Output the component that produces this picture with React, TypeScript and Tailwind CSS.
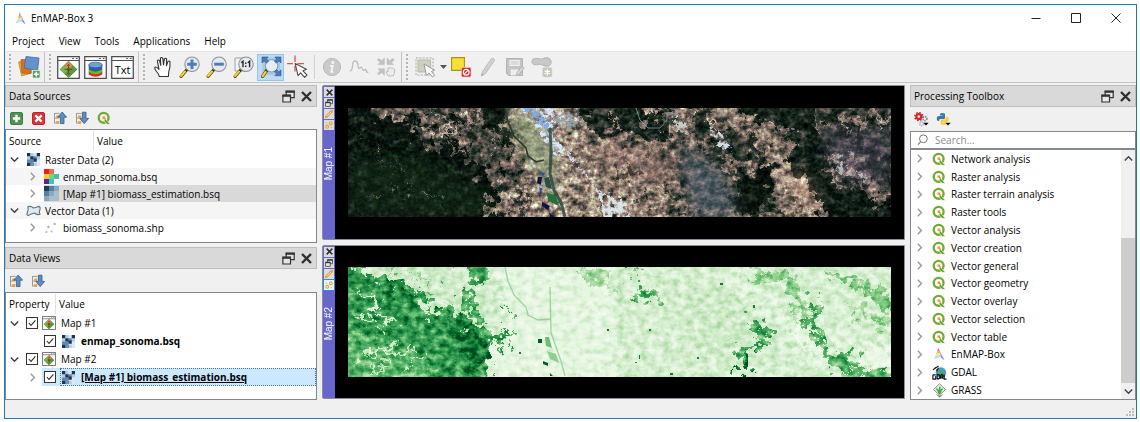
import React, { useState } from "react";

type Kids = { children?: React.ReactNode };

/* ---------- small drawings ---------- */

function Svg({ size = "size-4", box = "0 0 16 16", children }: Kids & { size?: string; box?: string }) {
  return (
    <svg viewBox={box} className={`${size} shrink-0`} fill="none" aria-hidden="true">
      {children}
    </svg>
  );
}

function PrismIcon({ size = "size-4" }: { size?: string }) {
  return (
    <Svg size={size}>
      <path d="M7 .6 L8.4 4.4 L5.8 5 Z" fill="#ee6d62" />
      <path d="M5.8 5 L8.4 4.4 L9.3 7 L4.8 7.6 Z" fill="#f8b25c" />
      <path d="M4.8 7.6 L9.3 7 L9.9 9 L3.8 10 Z" fill="#f3e98a" />
      <path d="M3.8 10 L9.9 9 L10.3 10.6 L2.8 12.2 Z" fill="#b4e6c0" />
      <path d="M2.8 12.2 L10.3 10.6 L10.4 11.4 L1.8 14 Z" fill="#b5dcf5" />
      <path d="M7 .6 L14.4 15.4 L10.2 10.8 Z" fill="#b3a4e4" />
      <path d="M10.2 9.6 L14.4 15.4 L10.6 12 Z" fill="#6c5cb8" />
    </Svg>
  );
}

function QIcon({ size = "size-4" }: { size?: string }) {
  return (
    <Svg size={size}>
      <circle cx="7.6" cy="7.8" r="5.6" stroke="#71aa35" strokeWidth="2.7" />
      <path d="M9.2 9 L15.4 15.2 H11.6 L8 11.4 Z" fill="#649e30" stroke="#fff" strokeWidth=".6" />
      <path d="M6.2 6.4 h3.4 l-.8 1 1.6 1.6 -1.2 1.2 -1.6 -1.5 -1 .9 Z" fill="#f28a2c" />
    </Svg>
  );
}

function GdalIcon() {
  return (
    <Svg size="size-[15px]">
      <circle cx="9.5" cy="8" r="5.6" fill="#3fa3c9" />
      <path d="M7 4 q3 0 3 3 l3 1 q1 3 -2 4 l-3 -3 z" fill="#5aa453" />
      <path d="M1 5 L7 1 M3 2.5 l3 2.5 M5 7 l2 -4" stroke="#222" strokeWidth="1.3" />
      <path d="M4 10.5h-3 M1 10 v5 h3 v-2.5 h-1 M5.5 10 v5 M5.5 10 q3 0 3 2.5 t-3 2.5 M9.5 15 v-4 l1 -1 1 1 v4 M9.5 13 h2 M13 10 v5 h2.4" stroke="#111" strokeWidth="1.2" />
    </Svg>
  );
}

function GrassIcon() {
  return (
    <Svg size="size-[15px]">
      <path d="M8 .8 L14.4 7 L8 12.8 L1.6 7 Z" fill="#eef2ee" stroke="#7d877d" />
      <path d="M3.4 11.4 L8 15.4 L12.6 11.4 L8 13.6 Z" fill="#777" />
      <path d="M8 12 Q7.6 8 4.6 6 M8 12 Q8 7 8.4 4 M8 12 Q8.6 8 11.4 6" stroke="#37ad3c" strokeWidth="1.7" />
    </Svg>
  );
}

function RasterIcon() {
  return (
    <Svg size="size-[13px]" box="0 0 12 12">
      <path d="M0 0h12v12H0z" fill="#dbe8f5" />
      <path d="M3 0h3v3H3zM9 3h3v3H9zM0 3h3v3H0zM6 9h3v3H6z" fill="#b4cde6" />
      <path d="M0 6h3v3H0zM6 3h3v3H6zM3 6h3v3H3z" fill="#5f87b5" />
      <path d="M0 0h3v3H0zM9 0h3v3H9zM3 3h3v3H3zM6 5h3v3H6zM0 9h3v3H0zM3 9h3v3H3z" fill="#1e3350" />
      <path d="M3 9h3v3H3z" fill="#6f93bd" />
    </Svg>
  );
}

function ColourGridIcon() {
  return (
    <Svg size="size-[15px]" box="0 0 15 15">
      <path d="M0 0h5v5H0z" fill="#ec1c24" />
      <path d="M5 0h5v5H5z" fill="#f26a4a" />
      <path d="M0 5h5v5H0z" fill="#f5c92d" />
      <path d="M5 5h5v5H5z" fill="#7ed07a" />
      <path d="M10 5h5v5h-5z" fill="#4bc0a4" />
      <path d="M0 10h5v5H0z" fill="#6a1d8c" />
      <path d="M5 10h5v5H5z" fill="#35c4c8" />
    </Svg>
  );
}

function BlueGridIcon() {
  return (
    <Svg size="size-[15px]" box="0 0 15 15">
      <path d="M0 0h15v15H0z" fill="#a9bfd0" />
      <path d="M0 0h5v5H0z" fill="#1c3f5e" />
      <path d="M5 0h5v5H5zM0 5h5v5H0z" fill="#58809f" />
      <path d="M10 0h5v5h-5zM5 5h5v5H5zM0 10h5v5H0z" fill="#8aa9c0" />
    </Svg>
  );
}

function PolygonIcon() {
  return (
    <Svg size="w-[15px] h-3" box="0 0 15 12">
      <path d="M2 1.6 Q5 .8 7.4 3 Q10 2.4 12.4 1.4 Q14.6 1.4 14 4.4 Q12.6 6.6 14 9.2 Q11 10.4 8.4 8 Q5.4 9 2 10.4 Q.4 10.2 1.2 7.8 Q2.6 4.8 2 1.6 Z" fill="#dfe9f2" stroke="#5c7186" strokeWidth="1.1" />
    </Svg>
  );
}

function PointsIcon() {
  return (
    <Svg size="w-[15px] h-3" box="0 0 15 12">
      <g fill="#b4b4b4">
        <circle cx="4.4" cy="5" r="1.2" />
        <circle cx="10.6" cy="2" r="1.2" />
        <circle cx="2.4" cy="10" r="1.1" />
        <circle cx="7.6" cy="9.6" r="1" />
      </g>
    </Svg>
  );
}

function MapWindow({ size = "size-[23px]" }: { size?: string }) {
  return (
    <Svg size={size} box="0 0 22 22">
      <path d="M.7 .7h20.6v20.6H.7z" fill="#fff" stroke="#4c4c4c" strokeWidth="1.2" />
      <path d="M1 4.3h20M14.5 2.4h1.6M18 2.4h1.6" stroke="#4c4c4c" />
      <path d="M11 5 L19 12.8 L11 20.6 L3 12.8 Z" fill="#5a9e3a" stroke="#355f2b" strokeWidth=".6" />
      <path d="M11 5 L15 9 L11 12.8 L7 9 Z" fill="#d98a4e" />
      <path d="M7 9 L11 12.8 L7 16.7 L3 12.8 Z" fill="#79ba4d" />
      <path d="M11 9v7.6M7.2 12.8h7.6M9.9 9.4 11 8l1.1 1.4M9.9 16.2 11 17.6l1.1-1.4" stroke="#5a3a20" strokeWidth=".8" />
      <circle cx="11" cy="12.8" r="1.5" fill="#8a3f1c" />
    </Svg>
  );
}

function DbWindow() {
  return (
    <Svg size="size-[23px]" box="0 0 22 22">
      <path d="M.7 .7h20.6v20.6H.7z" fill="#fff" stroke="#4c4c4c" strokeWidth="1.2" />
      <path d="M1 4.3h20M14.5 2.4h1.6M18 2.4h1.6" stroke="#4c4c4c" />
      <path d="M4.5 15v2.6q6.5 4.4 13 0V15z" fill="#e02b20" />
      <path d="M4.5 12.4v3q6.5 4.2 13 0v-3z" fill="#58c322" />
      <path d="M4.5 8.6v4.4q6.5 4 13 0V8.6z" fill="#315f9b" />
      <ellipse cx="11" cy="8.6" rx="6.5" ry="2.7" fill="#6fa0d6" stroke="#315f9b" strokeWidth=".7" />
    </Svg>
  );
}

function TxtWindow() {
  return (
    <span className="relative grid size-[23px] place-items-end justify-center">
      <span className="absolute inset-0">
        <Svg size="size-[23px]" box="0 0 22 22">
          <path d="M.7 .7h20.6v20.6H.7z" fill="#fff" stroke="#4c4c4c" strokeWidth="1.2" />
          <path d="M1 4.3h20M14.5 2.4h1.6M18 2.4h1.6" stroke="#4c4c4c" />
        </Svg>
      </span>
      <span className="relative pb-px text-[11px] leading-4">Txt</span>
    </span>
  );
}

function LayersAddIcon() {
  return (
    <Svg size="size-6" box="0 0 24 24">
      <path d="M1.6 7 L12 4.6 L14.6 18 L4.6 21 Z" fill="#e6b32e" stroke="#b07a17" strokeWidth=".7" />
      <path d="M4 4.6 L15 4.6 L13.4 18.6 L5 18 Z" fill="#dc6f25" stroke="#a95a17" strokeWidth=".7" />
      <path d="M9 1.5 L22 3 L20.6 15.4 L7.2 13 Z" fill="#6393ca" stroke="#3d6ba4" strokeWidth=".8" />
      <path d="M15.5 15.4h7.6v7.6h-7.6z" fill="#5d9b62" stroke="#e9f3e9" strokeWidth=".8" />
      <path d="M19.3 16.8v4.8M16.9 19.2h4.8" stroke="#fff" strokeWidth="1.6" />
    </Svg>
  );
}

function HandIcon() {
  return (
    <Svg size="size-6" box="0 0 24 24">
      <path d="M8.4 21.5 Q7.5 18.5 4.8 15.5 Q3 12.6 4.3 12 Q5.8 11.6 8 14.4 L6.4 6.2 Q6.6 4.4 8.4 5.4 L9.8 10.4 L9.4 3.3 Q10.4 1.8 11.8 3.2 L12.5 10 L13.4 3.8 Q14.6 2.6 15.6 4 L15.4 10.8 L17 6.4 Q18.6 5.4 19 7 Q19.3 12 17.8 16.6 L17.4 21.5 Z" fill="#fff" stroke="#333" strokeWidth="1.1" strokeLinejoin="round" />
    </Svg>
  );
}

function Lens({ children }: Kids) {
  return (
    <>
      <path d="M9 14.6 L3 21.4" stroke="#3c300c" strokeWidth="3" strokeLinecap="round" />
      <path d="M7 16.6 L3.1 21" stroke="#f4d42c" strokeWidth="2.2" strokeLinecap="round" />
      <circle cx="14" cy="9.2" r="7.2" fill="#e6eaee" stroke="#8a9299" strokeWidth="1.1" />
      {children}
    </>
  );
}

function ZoomInIcon() {
  return (
    <Svg size="size-6" box="0 0 24 24">
      <Lens>
        <path d="M14 4.4v9.6M9.2 9.2h9.6" stroke="#4a7db8" strokeWidth="3" />
      </Lens>
    </Svg>
  );
}

function ZoomOutIcon() {
  return (
    <Svg size="size-6" box="0 0 24 24">
      <Lens>
        <path d="M9.2 9.2h9.6" stroke="#4a7db8" strokeWidth="3" />
      </Lens>
    </Svg>
  );
}

function ZoomNativeIcon() {
  return (
    <Svg size="size-6" box="0 0 24 24">
      <path d="M3 3h11v13H3z" fill="#f3f3f3" stroke="#999" strokeWidth=".9" />
      <Lens>
        <path d="M9.2 7.8 11 6.3v6M15.8 7.8l1.8-1.5v6" stroke="#222" strokeWidth="1.4" />
        <path d="M13.7 7.4v1.5M13.7 10.4v1.5" stroke="#222" strokeWidth="1.4" />
      </Lens>
    </Svg>
  );
}

function ZoomFullIcon() {
  return (
    <Svg size="size-6" box="0 0 24 24">
      <path d="M3.5 2.5h17.5v17.5H3.5z" fill="#8fb4dc" opacity=".5" />
      <path d="M8 15 L3.6 21.4" stroke="#3c300c" strokeWidth="3.2" strokeLinecap="round" />
      <path d="M6.6 17 L3.7 21.2" stroke="#f4d42c" strokeWidth="2.2" strokeLinecap="round" />
      <circle cx="12.6" cy="10.8" r="6.2" fill="#e4ecf4" stroke="#8797a8" />
      <g fill="#4a7db8" stroke="#2c5588" strokeWidth=".6">
        <path d="M3 2h6.2L7.5 3.9l2.2 2.2-2.2 2.2-2.4-2.4L3 8z" />
        <path d="M22 2h-6.2l1.9 1.9-2.4 2.2 2.2 2.2 2.4-2.4L22 8z" />
        <path d="M22 20.8h-6.2l1.9-1.9-2.4-2.2 2.2-2.2 2.4 2.4 2.1-2.1z" />
      </g>
    </Svg>
  );
}

function IdentifyCursorIcon() {
  return (
    <Svg size="size-6" box="0 0 24 24">
      <path d="M9 .5v6.5M9 11v5.5M1 8.7h6M11.5 8.7H18" stroke="#e0544e" strokeWidth="1.3" />
      <path d="M9.2 8.6 L12 20.6 L14.6 17.8 L18.6 22.4 L21 20.2 L17 15.8 L20.4 14.2 Z" fill="#fff" stroke="#4a4a4a" strokeWidth="1.1" strokeLinejoin="round" />
    </Svg>
  );
}

function InfoIcon() {
  return (
    <Svg size="size-5" box="0 0 20 20">
      <circle cx="10" cy="10" r="8.6" fill="#cacaca" stroke="#bababa" />
      <circle cx="10.8" cy="5.4" r="1.5" fill="#f5f5f5" />
      <path d="M8 8.8h2.8L9.2 14.8h2.2" stroke="#f5f5f5" strokeWidth="1.8" />
    </Svg>
  );
}

function ProfileIcon() {
  return (
    <Svg size="size-5" box="0 0 20 20">
      <path d="M.8 14 Q3.4 13.6 3.6 8 Q4 3.6 6 4 Q8.6 4 9 8.4 Q9.2 12.6 11 11 Q12.6 9 13.6 12 Q14.6 14.6 16 12.6 Q17.4 11.8 17.6 15 L19.4 15.4" stroke="#bcbcbc" strokeWidth="1.3" />
    </Svg>
  );
}

function GridHandIcon() {
  return (
    <Svg size="size-5" box="0 0 20 20">
      <g fill="#c2c2c2" stroke="#b4b4b4" strokeWidth=".4">
        <path d="M8.4 1v6.6H1.8l2.2-2.2L1.4 3l1.4-1.6L5.8 3.6z" />
        <path d="M11 1v6.6h6.6l-2.2-2.2L18.4 3 17 1.4l-3.4 2.2z" />
        <path d="M8.4 18.4v-6.6H1.8L4 14l-2.6 2.6 1.4 1.4 3-2.6z" />
      </g>
      <path d="M12 18.8l-2-4q.6-1.6 2 0v-3.6q1-1 1.8 0 1-1 1.8.2 1-.7 1.7.4 1-.2 1.4.8l-.4 3.8-1 2.4z" fill="#ececec" stroke="#bcbcbc" />
    </Svg>
  );
}

function SelectIcon() {
  return (
    <Svg size="size-[22px]" box="0 0 22 22">
      <path d="M1 2h17v17H1z" stroke="#aaa" strokeDasharray="2 1.4" />
      <path d="M3 4h12.6v12H3z" fill="#cfcfbf" stroke="#b7b7a8" />
      <path d="M9 8 L11.4 19.5 L14 17 L17.4 21 L19.6 19.4 L16.4 15.4 L19.6 14 Z" fill="#f7f7f7" stroke="#999" strokeLinejoin="round" />
    </Svg>
  );
}

function DeselectIcon() {
  return (
    <Svg size="size-[22px]" box="0 0 22 22">
      <path d="M1.6 1.6h12.8v12.8H1.6z" fill="#f8e037" stroke="#ab9115" strokeWidth="1.1" />
      <rect x="11.4" y="11.4" width="9.6" height="9.6" rx="1.4" fill="#d8282e" stroke="#f2c9ca" strokeWidth=".7" />
      <circle cx="16.2" cy="16.2" r="2.9" stroke="#fff" strokeWidth="1.2" />
      <path d="M14.2 18.2l4-4" stroke="#fff" strokeWidth="1.2" />
    </Svg>
  );
}

function PencilIcon() {
  return (
    <Svg size="size-5" box="0 0 20 20">
      <path d="M3.4 19 L4.6 14.4 L13.6 1.4 Q15.6 .6 16.6 3.2 L7.6 16.4 Z" fill="#d2d2cc" stroke="#bdbdb8" />
      <path d="M3.4 19 L4 16.6 L5.4 17.6 Z" fill="#999" />
    </Svg>
  );
}

function SaveIcon() {
  return (
    <Svg size="size-5" box="0 0 20 20">
      <path d="M1.5 1.5h16v17h-14l-2-2z" fill="#c4c4c4" stroke="#b2b2b2" />
      <path d="M4.4 3h10.4v6H4.4z" fill="#efefef" />
      <path d="M5.6 5h8M5.6 7h8" stroke="#c6c6c6" />
      <path d="M5.6 12.4h7.6v6H5.6z" fill="#ededed" />
      <path d="M11 18.6 L12 15.6 L17 9.4 L19.2 11 L14 17.4 Z" fill="#dcd7d2" stroke="#b3aca6" strokeWidth=".8" />
    </Svg>
  );
}

function PolygonAddIcon() {
  return (
    <Svg size="size-[22px]" box="0 0 22 22">
      <path d="M1.6 3.4 Q4 1.8 7.4 2.6 Q11 4 14 1.8 Q18.6 1 20 4.6 Q20.8 9 17.4 10.2 Q13.6 10.6 11.6 9 Q8.4 7.4 5.6 8.8 Q1.6 9.4 1 6.8 Q.8 4.6 1.6 3.4 Z" fill="#c8c8c8" stroke="#b6b6b6" />
      <rect x="11.6" y="11.6" width="9.4" height="9.4" rx="1.4" fill="#c2c2b8" stroke="#dededc" strokeWidth=".7" />
      <path d="M16.3 13v6.6M13.5 14.7l5.6 3.2M19.1 14.7l-5.6 3.2" stroke="#fff" strokeWidth="1.3" />
    </Svg>
  );
}

function AddIcon() {
  return (
    <Svg size="size-[13px]" box="0 0 13 13">
      <rect x=".5" y=".5" width="12" height="12" rx="1.5" fill="#4f9156" stroke="#3d7d45" />
      <path d="M6.5 2.8v7.4M2.8 6.5h7.4" stroke="#fff" strokeWidth="2.4" />
    </Svg>
  );
}

function RemoveIcon() {
  return (
    <Svg size="size-[13px]" box="0 0 13 13">
      <rect x=".5" y=".5" width="12" height="12" rx="1.5" fill="#dc3339" stroke="#c2242a" />
      <path d="M3.4 3.4l6.2 6.2M9.6 3.4L3.4 9.6" stroke="#fff" strokeWidth="2.2" />
    </Svg>
  );
}

function TreeArrowIcon({ down = false }: { down?: boolean }) {
  return (
    <Svg size="size-[14px]" box="0 0 14 14">
      <path d="M1.5 2v10.4M1.5 2.4h5M1.5 7h3M1.5 12h3" stroke="#9b9b9b" />
      <path d="M3.2 4.6h3v3h-3zM3.2 10h3v3h-3z" fill="#f0a03c" />
      {down ? (
        <path d="M7.4 1.2h3.6v6.2h2.6L9.2 12.6 4.8 7.4h2.6z" fill="#5d8dc4" stroke="#2f5a8b" strokeWidth=".8" />
      ) : (
        <path d="M7.4 12.6h3.6V6.2h2.6L9.2 1 4.8 6.2h2.6z" fill="#5d8dc4" stroke="#2f5a8b" strokeWidth=".8" />
      )}
    </Svg>
  );
}

function GearsIcon() {
  return (
    <Svg size="size-[15px]" box="0 0 15 15">
      <circle cx="4.8" cy="4.6" r="2.5" stroke="#d3242b" strokeWidth="2.2" />
      <circle cx="4.8" cy="4.6" r="4" stroke="#d3242b" strokeWidth="1.4" strokeDasharray="1.57 1.57" />
      <circle cx="11" cy="6.6" r="2" stroke="#8a8a8a" strokeWidth="1.6" strokeDasharray="1.4 .7" />
      <circle cx="7.6" cy="11.8" r="1.9" stroke="#9dbbe4" strokeWidth="1.6" strokeDasharray="1.4 .6" />
      <path d="M9.4 10.8h5.2L12 13.6z" fill="#000" />
    </Svg>
  );
}

function PythonIcon() {
  return (
    <Svg size="size-[15px]" box="0 0 15 15">
      <path d="M4 1.8Q6.4.4 9 1.8V6Q9 7 8 7H4.4Q3 7 3 9H2Q.4 8.4.8 5.6 1 4 3 4h3.4V3.4H4z" fill="#3b75ab" />
      <path d="M10 4.4h1.4Q13 5 12.8 8q-.2 2-2 2H7v.6h3v1.6q-2.6 1.4-5.4 0V8.6Q4.6 7.6 6 7.6h3Q10 7.4 10 6z" fill="#f6cf43" />
      <path d="M9.4 10.8h5.2L12 13.6z" fill="#000" />
    </Svg>
  );
}

function FloatIcon({ size = "size-[13px]" }: { size?: string }) {
  return (
    <Svg size={size} box="0 0 13 13">
      <path d="M4.2 1h8v6.6h-8z" fill="#e6e6e6" stroke="#333" strokeWidth="1.2" />
      <path d="M3.6 1.8h9.2" stroke="#333" strokeWidth="2" />
      <path d="M.9 5.2h7.6V12H.9z" fill="#e6e6e6" stroke="#333" strokeWidth="1.2" />
      <path d="M.4 5.8h8.6" stroke="#333" strokeWidth="2" />
    </Svg>
  );
}

function CrossIcon({ size = "size-[11px]" }: { size?: string }) {
  return (
    <Svg size={size} box="0 0 11 11">
      <path d="M1 1l9 9M10 1L1 10" stroke="#303030" strokeWidth="2.4" />
    </Svg>
  );
}

function LinkIcon() {
  return (
    <Svg size="size-2" box="0 0 8 8">
      <path d="M1 7 L7 1" stroke="#e8a23c" strokeWidth="2.6" strokeLinecap="round" />
      <path d="M2 6 L6 2" stroke="#fbe6c0" strokeWidth=".8" />
    </Svg>
  );
}

function UnlinkIcon() {
  return (
    <Svg size="size-2" box="0 0 8 8">
      <g stroke="#e8a23c" strokeWidth="1.1">
        <circle cx="5.8" cy="2.2" r="1.4" />
        <circle cx="2.2" cy="5.8" r="1.4" />
        <path d="M1 2l1 .4M6 6.8l.6-.8" />
      </g>
    </Svg>
  );
}

function Chevron({ open }: { open: boolean }) {
  return (
    <Svg size="size-[9px]" box="0 0 9 9">
      {open ? (
        <path d="M.8 2.6 L4.5 6.2 L8.2 2.6" stroke="#404040" strokeWidth="1.4" />
      ) : (
        <path d="M2.8 .8 L6.4 4.5 L2.8 8.2" stroke="#9a9a9a" strokeWidth="1.4" />
      )}
    </Svg>
  );
}

/* ---------- map imagery ---------- */

function TrueColourScene() {
  return (
    <svg viewBox="0 0 543 109" className="block h-auto w-full" role="img" aria-label="enmap_sonoma.bsq">
      <defs>
        <filter id="tc" filterUnits="userSpaceOnUse" x="0" y="0" width="543" height="109" colorInterpolationFilters="sRGB">
          <feTurbulence type="fractalNoise" baseFrequency=".09" numOctaves="5" seed="5" />
          <feColorMatrix values="1 0 0 0 0 0 1 0 0 0 0 0 1 0 0 0 0 0 0 1" result="warp" />
          <feDisplacementMap in="SourceGraphic" in2="warp" scale="38" xChannelSelector="R" yChannelSelector="G" />
          <feGaussianBlur stdDeviation=".6" result="field" />
          <feTurbulence type="fractalNoise" baseFrequency=".1 .13" numOctaves="5" seed="11" />
          <feColorMatrix values="1 0 0 0 0 1 0 0 0 0 1 0 0 0 0 0 0 0 0 1" result="grey" />
          <feComposite in="field" in2="grey" operator="arithmetic" k1="1.1" k2=".45" k3=".45" k4="-.225" />
          <feColorMatrix values="1 0 0 0 0 1 0 0 0 0 1 0 0 0 0 0 0 0 0 1" />
          <feComponentTransfer result="ramp">
            <feFuncR type="table" tableValues=".02 .06 .2 .42 .6 .7 .8 .92" />
            <feFuncG type="table" tableValues=".05 .12 .24 .37 .51 .65 .78 .9" />
            <feFuncB type="table" tableValues=".04 .08 .21 .34 .46 .56 .7 .86" />
          </feComponentTransfer>
          <feTurbulence type="fractalNoise" baseFrequency=".3" numOctaves="4" seed="4" />
          <feColorMatrix values="1.2 .3 .1 0 -.3 .9 .6 .1 0 -.3 .9 .2 .5 0 -.3 0 0 0 0 1" result="chroma" />
          <feComposite in="ramp" in2="chroma" operator="arithmetic" k1=".9" k2=".55" k3=".12" k4="-.06" />
        </filter>
        <filter id="rough" filterUnits="userSpaceOnUse" x="0" y="0" width="543" height="109" colorInterpolationFilters="sRGB">
          <feTurbulence type="fractalNoise" baseFrequency=".2" numOctaves="4" seed="9" result="n" />
          <feColorMatrix values="1 0 0 0 0 0 1 0 0 0 0 0 1 0 0 0 0 0 0 1" result="w" />
          <feDisplacementMap in="SourceGraphic" in2="w" scale="14" xChannelSelector="R" yChannelSelector="G" result="d" />
          <feColorMatrix in="n" values="0 0 0 0 0 0 0 0 0 0 0 0 0 0 0 0 0 0 6 -2.4" result="m" />
          <feComposite in="d" in2="m" operator="in" />
        </filter>
        <filter id="soft" filterUnits="userSpaceOnUse" x="0" y="0" width="543" height="109">
          <feGaussianBlur stdDeviation="7" />
        </filter>
      </defs>
      <g filter="url(#tc)">
        <path d="M-20-20h583v149H-20z" fill="#747474" />
        <path d="M-20-20H148L152 12 168 48 177 85V129H-20z" fill="#5a5a5a" />
        <path d="M-20-20H12L32 12 60 15 73 29 84 46 98 33 114 48 128 58 140 70 146 96 138 129H-20z" fill="#181818" />
        <path d="M40 8L58 4 64 12 50 14zM70 12L84 20 86 34 78 26zM88 2L98 10 106 26 98 22zM118 4L130 12 124 22zM142 30L150 42 146 46z" fill="#a4a4a4" />
        <path d="M60 0L72 6 78 14 64 8zM96 22L110 30 122 44 112 42zM108 4L118 14 116 24 106 14z" fill="#1c1c1c" />
        <path d="M128-20H148L160 25 166 50 142 20z" fill="#222" />
        <path d="M150 54L162 62 160 70 146 66z" fill="#202020" />
        <path d="M14 92L30 84 50 84 64 80M16 20L26 40 44 60M40 70L60 60M80 84L100 96" stroke="#585858" strokeWidth="1.8" />
        <path d="M146 78L172 82V109H140z" fill="#8c8c8c" />
        <path d="M158-10H225L250 60 262 120H178L176 60z" fill="#a0a0a0" />
        <path d="M225 30L290 50 325 110H220z" fill="#8e8e8e" />
        <path d="M232-10H320L318 30 302 36 262 26 236 20z" fill="#303030" />
        <path d="M232 14L258 30 262 40 236 34zM264 4L274 20 270 24zM294-4L310 0 308 14 298 12z" fill="#8c8c8c" />
        <path d="M270 56L284 58 290 70 276 72zM300 44L312 50 308 56zM318 78L336 90 330 100zM292 84L300 90 296 100z" fill="#3c3c3c" />
        <path d="M322 36L352 42 376 60 388 109H345L330 70z" fill="#585858" />
        <path d="M342 6L364 10 388 42 374 44 350 26z" fill="#b0b0b0" />
        <path d="M345-10L368 20 410 34 420 60 428 109H386L372 60 345 20z" fill="#404040" />
        <path d="M372 52L400 44 408 58 384 68z" fill="#787878" />
        <path d="M390 78L422 54 424 84 410 106H386z" fill="#161616" />
        <path d="M388-10H470V20L480 60 484 96 462 90 440 60 446 20 404 12z" fill="#282828" />
        <path d="M470-10H560V80H490L474 40z" fill="#464646" />
        <path d="M480 12L500 16 530 44 516 40zM510 44L540 50 540 66 524 60z" fill="#222" />
        <path d="M498 4L510 4 506 24 496 20zM520 2L540 6V14L522 12z" fill="#888" />
        <path d="M408 14L436 20 442 40 430 52 416 34z" fill="#848484" />
        <path d="M374-6L396 18 420 40 440 62" stroke="#929292" strokeWidth="9" />
        <path d="M426 60L452 64 478 96 462 106 434 80z" fill="#a0a0a0" />
        <path d="M482 44L498 46 516 62 518 76 496 72z" fill="#868686" />
        <path d="M466 84L500 76 560 92V129H482z" fill="#242424" />
        <path d="M514 78H543V94H520z" fill="#6c6c6c" />
      </g>
      <g filter="url(#soft)">
        <path d="M160 0L190 12 206 44 210 95 190 66 166 30z" fill="#8ba37a" opacity=".6" />
        <path d="M330 36L372 60 392 109H345z" fill="#62788c" opacity=".45" />
        <path d="M470 20H543V76H494z" fill="#675b7c" opacity=".35" />
        <path d="M0 50L80 50 144 90 138 109H0z" fill="#123816" opacity=".35" />
        <path d="M250 34L300 40 330 60 300 80 256 60z" fill="#b3847a" opacity=".35" />
        <path d="M430 62L456 66 476 96 452 90z" fill="#d59f85" opacity=".4" />
      </g>
      <g filter="url(#rough)">
        <path d="M170 -4H200L216 12 206 26 220 48 206 44 190 22z" fill="#d6e6ff" />
        <path d="M172 -4H186L202 18 198 24z" fill="#7fabe6" />
        <path d="M204 10L224 6 238 12 222 20 206 18z" fill="#91a1ad" />
        <path d="M220 44L244 76 258 96" stroke="#d4dcea" strokeWidth="3" />
        <path d="M324 9L336 11 342 26 330 24z" fill="#c8ccc6" />
        <path d="M362 20L376 30 386 42 372 40z" fill="#d4d8e2" />
        <path d="M252 84L276 92 286 115H250z" fill="#dbe4e4" />
        <path d="M484 46L496 50 504 68 490 62zM506 60L522 70 518 76z" fill="#b5b9be" />
        <path d="M528 10L538 16 532 22z" fill="#c8c8b4" />
      </g>
      <path d="M157 0L160 14 166 28 178 40 180 48 188 54 196 52" stroke="#28382a" strokeWidth="1.6" fill="none" />
      <path d="M202 20L203 42 202 66 206 82 213 94 217 109" stroke="#2a4a3e" strokeWidth="3" fill="none" opacity=".85" />
      <path d="M196 70l5-1 3 12-6-2z" fill="#2d4d42" />
      <path d="M198 84l10 4 3 10-10-5z" fill="#23703d" />
      <path d="M190 69h4l-1 8-4-2zM194 94l8 4-2 4-6-4zM201 104l5 5h-4z" fill="#0d1244" />
      <path d="M191 79l4 2-3 3zM192 64l5 1-2 3z" fill="#204ca4" />
      <path d="M288 0L292 12 300 20 312 20 319 12V4L334 8" stroke="#7ca3a8" strokeWidth="1" fill="none" opacity=".8" />
    </svg>
  );
}

function BiomassScene() {
  return (
    <svg viewBox="0 0 543 110" className="block h-auto w-full" role="img" aria-label="biomass_estimation.bsq">
      <defs>
        <filter id="bio" filterUnits="userSpaceOnUse" x="0" y="0" width="543" height="110" colorInterpolationFilters="sRGB">
          <feTurbulence type="fractalNoise" baseFrequency=".1" numOctaves="5" seed="5" />
          <feColorMatrix values="1 0 0 0 0 0 1 0 0 0 0 0 1 0 0 0 0 0 0 1" result="warp" />
          <feDisplacementMap in="SourceGraphic" in2="warp" scale="36" xChannelSelector="R" yChannelSelector="G" />
          <feGaussianBlur stdDeviation=".6" result="field" />
          <feTurbulence type="fractalNoise" baseFrequency=".13 .16" numOctaves="5" seed="23" />
          <feColorMatrix values="1 0 0 0 0 1 0 0 0 0 1 0 0 0 0 0 0 0 0 1" result="grey" />
          <feComposite in="field" in2="grey" operator="arithmetic" k1=".7" k2=".65" k3=".36" k4="-.18" />
          <feColorMatrix values="1 0 0 0 0 1 0 0 0 0 1 0 0 0 0 0 0 0 0 1" />
          <feComponentTransfer>
            <feFuncR type="table" tableValues=".95 .89 .79 .65 .46 .26 .15 .02 0" />
            <feFuncG type="table" tableValues=".98 .96 .91 .85 .77 .66 .55 .44 .28" />
            <feFuncB type="table" tableValues=".93 .87 .76 .62 .47 .37 .28 .18 .12" />
          </feComponentTransfer>
        </filter>
      </defs>
      <g filter="url(#bio)">
        <path d="M-20-20h583v150H-20z" fill="#303030" />
        <path d="M150-20H260L270 130H140z" fill="#1c1c1c" />
        <path d="M12-10H140L160 50 145 70 80 40z" fill="#363636" />
        <path d="M-20-20H10L24 16 36 12 62 18 74 32 84 52 96 34 112 48 126 58 140 66 156 70 144 78 142 98 134 130H-20z" fill="#b0b0b0" />
        <path d="M-20 60L40 74 84 96 76 130H-20z" fill="#929292" />
        <path d="M14 92L30 84 50 84 64 80M16 20L26 40 44 60M60 100L78 92M8 46L30 60M24 104L40 98" stroke="#3c3c3c" strokeWidth="3" />
        <path d="M30 12L60 18 70 34 50 36z" fill="#cacaca" />
        <path d="M100 50L120 54 142 80 142 98 128 104 110 80z" fill="#d6d6d6" />
        <path d="M102-8L130-6 142 12 132 16z" fill="#a0a0a0" />
        <path d="M112 20L124 30 136 56 128 54 116 40z" fill="#a4a4a4" />
        <path d="M142 66L158 66 156 72 142 74zM158 38L168 44 166 50zM150 80L160 76 158 82z" fill="#a4a4a4" />
        <path d="M40 2L50 4 48 10zM60 4L76 14 70 16zM80 14L88 26 82 24z" fill="#707070" />
        <path d="M230 0L262 6 262 24 240 16z" fill="#606060" />
        <path d="M270-6H286L290 8zM284 24L304 22 312 30 294 36z" fill="#909090" />
        <path d="M325 20L400 30 408 80 350 90z" fill="#393939" />
        <path d="M400 54L418 56 422 74 404 84 398 102 386 96 388 86 412 74z" fill="#a4a4a4" />
        <path d="M390 94L402 86 400 104 388 104z" fill="#e8e8e8" />
        <path d="M400 4L448 4 460 54 450 50 438 14 404 12z" fill="#6c6c6c" />
        <path d="M462 30L474 32 468 60 482 86 510 92 514 102 490 102 466 84 460 60z" fill="#989898" />
        <path d="M476 4L496 6 543 26V46L500 16z" fill="#767676" />
        <path d="M500 36L543 54V66L510 46z" fill="#666" />
        <path d="M476 30L500 60 510 80 490 76z" fill="#262626" />
        <path d="M492 104H543V125H500z" fill="#8c8c8c" />
        <path d="M512 78H543V100H514z" fill="#121212" />
        <path d="M380 0L420 40 460 70 480 105" stroke="#1c1c1c" strokeWidth="8" />
      </g>
      <path d="M157 0L160 14 166 28 178 40 180 48 190 53 202 52 M202 20L203 66 213 94 217 109" stroke="#8dce93" strokeWidth="1.3" fill="none" opacity=".85" />
      <path d="M197 70l4 0 3 11-6-2z" fill="#6cbd75" />
      <path d="M199 84l9 3 3 9-9-4z" fill="#8fcf91" />
      <path d="M190 72h4v4h-4zM195 94l5 2 0 3-5-2zM202 106l3 3h-3z" fill="#07582b" />
      <g fill="#1b7a3b">
        <path d="M259 62h2v2h-2zM291 88h1v4h-1zM322 106h3v2h-3zM349 90h2v2h-2zM372 16h3v2h-3zM405 38h2v3h-2zM301 62h2v2h-2zM171 85h2v2h-2zM287 95h2v1h-2z" />
      </g>
    </svg>
  );
}

/* ---------- window parts ---------- */

function IconButton({ label, children }: Kids & { label: string }) {
  return (
    <button type="button" aria-label={label} title={label} className="grid h-5 w-[22px] place-items-center hover:bg-[#d8e6f2]">
      {children}
    </button>
  );
}

function Tool({ label, active, disabled, children }: Kids & { label: string; active?: boolean; disabled?: boolean }) {
  return (
    <button
      type="button"
      aria-label={label}
      title={label}
      disabled={disabled}
      className={
        active
          ? "grid h-[27px] w-[27px] place-items-center border border-[#92c5ef] bg-[#bcdcf4]"
          : "grid h-[27px] w-[27px] place-items-center enabled:hover:bg-[#d8e6f2]"
      }
    >
      {children}
    </button>
  );
}

function Handle() {
  return <span className="mx-1 h-[26px] w-0 border-l-2 border-dotted border-[#b4b4b4]" />;
}

function Divider() {
  return <span className="ml-0.5 h-[31px] w-px bg-[#c4c4c4]" />;
}

function DockTitle({ children }: Kids) {
  return (
    <div className="flex h-[22px] items-center border border-[#bdbdbd] bg-[#d9d9d9] pr-1 pl-[3px]">
      <h2 className="flex-1">{children}</h2>
      <button type="button" aria-label="Float panel" className="mr-1.5">
        <FloatIcon />
      </button>
      <button type="button" aria-label="Close panel">
        <CrossIcon />
      </button>
    </div>
  );
}

function ColumnHeads({ first, second }: { first: string; second: string }) {
  return (
    <div className="flex h-[21px] items-center">
      <span
        className={
          first === "Source"
            ? "w-[88px] border-r border-[#e0e0e0] pl-[3px] leading-5"
            : "w-[50px] border-r border-[#e0e0e0] pl-[3px] leading-5"
        }
      >
        {first}
      </span>
      <span className="pl-[3px]">{second}</span>
    </div>
  );
}

function Check({ label }: { label: string }) {
  const [on, setOn] = useState(true);
  return (
    <span className="grid size-3 shrink-0 place-items-center">
      <input
        type="checkbox"
        aria-label={label}
        checked={on}
        onChange={() => setOn(!on)}
        className="peer col-start-1 row-start-1 size-3 appearance-none border border-[#333] bg-white"
      />
      <svg viewBox="0 0 10 10" className="pointer-events-none invisible col-start-1 row-start-1 size-[10px] peer-checked:visible" fill="none" aria-hidden="true">
        <path d="M1.8 5 L4 7.4 L8.4 2.4" stroke="#333" strokeWidth="1.1" />
      </svg>
    </span>
  );
}

type SourceRow = { name: string; icon: React.ReactNode; open: boolean; look: string; selected?: boolean };

const sources: SourceRow[] = [
  { name: "Raster Data (2)", icon: <RasterIcon />, open: true, look: "flex pl-1" },
  { name: "enmap_sonoma.bsq", icon: <ColourGridIcon />, open: false, look: "flex bg-[#f5f5f5] pl-[22px]" },
  { name: "[Map #1] biomass_estimation.bsq", icon: <BlueGridIcon />, open: false, look: "flex pl-[22px]", selected: true },
  { name: "Vector Data (1)", icon: <PolygonIcon />, open: true, look: "flex bg-[#f5f5f5] pl-1" },
  { name: "biomass_sonoma.shp", icon: <PointsIcon />, open: false, look: "flex pl-[22px]" },
];

function DataSources() {
  return (
    <section className="flex flex-col">
      <DockTitle>Data Sources</DockTitle>
      <div className="flex h-[22px] items-center">
        <IconButton label="Add data source"><AddIcon /></IconButton>
        <IconButton label="Remove data source"><RemoveIcon /></IconButton>
        <IconButton label="Collapse all"><TreeArrowIcon /></IconButton>
        <IconButton label="Expand all"><TreeArrowIcon down /></IconButton>
        <IconButton label="Synchronise with QGIS"><QIcon size="size-[14px]" /></IconButton>
      </div>
      <div className="border border-[#828790] bg-white pb-1.5">
        <ColumnHeads first="Source" second="Value" />
        <ul role="tree" aria-label="Data sources">
          {sources.map((s) => (
            <li key={s.name} role="treeitem" aria-expanded={s.open} aria-selected={!!s.selected} className={s.look}>
              <span className="flex w-4 items-center">
                <Chevron open={s.open} />
              </span>
              <span className={s.selected ? "flex h-[17px] flex-1 items-center gap-1 bg-[#d9d9d9]" : "flex h-[17px] flex-1 items-center gap-1"}>
                <span className="grid w-[15px] place-items-center">{s.icon}</span>
                {s.name}
              </span>
            </li>
          ))}
        </ul>
      </div>
    </section>
  );
}

function DataViews() {
  return (
    <section className="flex flex-1 flex-col">
      <DockTitle>Data Views</DockTitle>
      <div className="flex h-[23px] items-center">
        <IconButton label="Collapse all views"><TreeArrowIcon /></IconButton>
        <IconButton label="Expand all views"><TreeArrowIcon down /></IconButton>
      </div>
      <div className="flex-1 border border-[#828790] bg-white">
        <ColumnHeads first="Property" second="Value" />
        <ul role="tree" aria-label="Data views">
          <li role="treeitem" aria-expanded="true" className="flex h-[18px] items-center pl-1">
            <span className="w-4"><Chevron open /></span>
            <Check label="Map #1" />
            <span className="mx-1"><MapWindow size="size-[14px]" /></span>
            <span className="pl-px">Map #1</span>
          </li>
          <li role="treeitem" className="flex h-[18px] items-center gap-1.5 pl-[38px] font-bold">
            <Check label="enmap_sonoma.bsq" />
            <RasterIcon />
            enmap_sonoma.bsq
          </li>
          <li role="treeitem" aria-expanded="true" className="flex h-[18px] items-center pl-1">
            <span className="w-4"><Chevron open /></span>
            <Check label="Map #2" />
            <span className="mx-1"><MapWindow size="size-[14px]" /></span>
            <span className="pl-px">Map #2</span>
          </li>
          <li role="treeitem" aria-selected="true" aria-expanded="false" className="flex h-[18px] items-center pl-[22px] font-bold">
            <span className="w-3.5"><Chevron open={false} /></span>
            <span className="flex h-full flex-1 items-center bg-[#cce8ff] pl-0.5">
              <Check label="biomass_estimation.bsq" />
              <span className="ml-1 flex h-full flex-1 items-center gap-1.5 border border-dotted border-[#45789c] pl-px">
                <RasterIcon />
                <span className="underline">[Map #1] biomass_estimation.bsq</span>
              </span>
            </span>
          </li>
        </ul>
      </div>
    </section>
  );
}

function StripButton({ label, on, children }: Kids & { label: string; on?: boolean }) {
  return (
    <button
      type="button"
      aria-label={label}
      className={on ? "grid size-[10px] place-items-center bg-[#e6f4ff] outline outline-[#1f8fea]" : "grid size-[10px] place-items-center bg-[#dcdcdc]"}
    >
      {children}
    </button>
  );
}

function MapDock({ name, linked, children }: Kids & { name: string; linked?: boolean }) {
  return (
    <section className="flex flex-1 rounded-l-xs border border-[#8a8f9c] bg-[#6666cc]">
      <div className="flex w-3 flex-col items-center gap-px pt-px">
        <StripButton label={`Close ${name}`}><CrossIcon size="size-[7px]" /></StripButton>
        <StripButton label={`Float ${name}`}><FloatIcon size="size-2" /></StripButton>
        <StripButton label={`Link ${name}`}><LinkIcon /></StripButton>
        <StripButton label={`Unlink ${name}`} on={linked}><UnlinkIcon /></StripButton>
        <h2 className="mt-4 rotate-180 font-['Liberation_Sans',sans-serif] leading-3 text-white [writing-mode:vertical-rl]">{name}</h2>
      </div>
      <div className="flex min-w-0 flex-1 items-center bg-black px-[13px]">{children}</div>
    </section>
  );
}

const algorithms = [
  "Network analysis",
  "Raster analysis",
  "Raster terrain analysis",
  "Raster tools",
  "Vector analysis",
  "Vector creation",
  "Vector general",
  "Vector geometry",
  "Vector overlay",
  "Vector selection",
  "Vector table",
  "EnMAP-Box",
  "GDAL",
  "GRASS",
];

function providerIcon(name: string) {
  if (name === "EnMAP-Box") return <PrismIcon size="size-[14px]" />;
  if (name === "GDAL") return <GdalIcon />;
  if (name === "GRASS") return <GrassIcon />;
  return <QIcon size="size-[14px]" />;
}

function ProcessingToolbox() {
  return (
    <aside className="flex w-[226px] shrink-0 flex-col">
      <DockTitle>Processing Toolbox</DockTitle>
      <div className="flex h-6 items-center">
        <IconButton label="Models"><GearsIcon /></IconButton>
        <IconButton label="Scripts"><PythonIcon /></IconButton>
      </div>
      <label className="flex h-[18px] items-center gap-1.5 border border-[#828790] bg-white pl-1.5">
        <Svg size="size-3" box="0 0 12 12">
          <circle cx="6.4" cy="4.8" r="3.9" stroke="#777" />
          <path d="M3.6 7.8 L1 10.6" stroke="#777" strokeWidth="1.2" />
        </Svg>
        <input type="search" aria-label="Search algorithms" placeholder="Search..." className="w-full bg-transparent outline-none placeholder:text-[#8c8c8c]" />
      </label>
      <div className="flex min-h-0 flex-1 border border-[#828790] bg-white">
        <ul role="tree" aria-label="Algorithms" className="flex flex-1 flex-col">
          {algorithms.map((a) => (
            <li key={a} role="treeitem" aria-expanded="false" className="flex max-h-[18px] flex-1 items-center pl-1">
              <span className="w-4"><Chevron open={false} /></span>
              <span className="mr-1 grid w-4 place-items-center">{providerIcon(a)}</span>
              {a}
            </li>
          ))}
        </ul>
        <div className="flex w-3.5 flex-col bg-[#f0f0f0]">
          <button type="button" aria-label="Scroll up" className="grid h-4 place-items-center">
            <span className="rotate-180"><Chevron open /></span>
          </button>
          <div className="flex flex-1 flex-col justify-end">
            <div className="h-2/3 bg-[#cdcdcd]" />
          </div>
          <button type="button" aria-label="Scroll down" className="grid h-4 place-items-center">
            <Chevron open />
          </button>
        </div>
      </div>
    </aside>
  );
}

export default function App() {
  return (
    <div className="flex min-h-screen bg-white pt-1 pr-[3px] pb-[3px] pl-1 font-['Open_Sans','Noto_Sans',sans-serif] text-[10px] leading-4 text-black">
      <div className="flex min-w-0 flex-1 flex-col border border-[#1f7ac2] bg-[#f0f0f0]">
        <header className="bg-white">
          <div className="flex h-[26px] items-center pl-[9px]">
            <PrismIcon size="size-[13px]" />
            <h1 className="flex-1 pl-1">EnMAP-Box 3</h1>
            <button type="button" aria-label="Minimise" className="grid w-10 place-items-center">
              <Svg size="size-[10px]" box="0 0 10 10"><path d="M.5 5.5h9" stroke="#222" /></Svg>
            </button>
            <button type="button" aria-label="Maximise" className="grid w-10 place-items-center">
              <Svg size="size-[10px]" box="0 0 10 10"><path d="M.5 .5h9v9h-9z" stroke="#222" /></Svg>
            </button>
            <button type="button" aria-label="Close" className="grid w-10 place-items-center">
              <Svg size="size-[10px]" box="0 0 10 10"><path d="M.5 .5l9 9M9.5 .5l-9 9" stroke="#222" /></Svg>
            </button>
          </div>
          <nav aria-label="Main menu" className="flex h-5 items-center gap-3.5 pl-[7px]">
            <button type="button">Project</button>
            <button type="button">View</button>
            <button type="button">Tools</button>
            <button type="button">Applications</button>
            <button type="button">Help</button>
          </nav>
        </header>
        <div role="toolbar" aria-label="Tools" className="flex h-8 items-center border-y border-t-[#e4e4e4] border-b-[#c4c4c4]">
          <Handle />
          <Tool label="Add data"><LayersAddIcon /></Tool>
          <Divider />
          <Handle />
          <Tool label="New map window"><MapWindow /></Tool>
          <Tool label="New spectral library"><DbWindow /></Tool>
          <Tool label="New text window"><TxtWindow /></Tool>
          <Divider />
          <Handle />
          <Tool label="Pan"><HandIcon /></Tool>
          <Tool label="Zoom in"><ZoomInIcon /></Tool>
          <Tool label="Zoom out"><ZoomOutIcon /></Tool>
          <Tool label="Zoom to pixel scale"><ZoomNativeIcon /></Tool>
          <Tool label="Zoom full" active><ZoomFullIcon /></Tool>
          <Tool label="Identify"><IdentifyCursorIcon /></Tool>
          <span className="mx-[3px] h-6 w-px bg-[#d0d0d0]" />
          <Tool label="Cursor values" disabled><InfoIcon /></Tool>
          <Tool label="Profiles" disabled><ProfileIcon /></Tool>
          <Tool label="Center" disabled><GridHandIcon /></Tool>
          <Divider />
          <Handle />
          <Tool label="Select features" disabled><SelectIcon /></Tool>
          <button type="button" aria-label="Selection modes" className="grid w-2 place-items-center">
            <Svg size="w-[7px] h-1" box="0 0 7 4"><path d="M0 0h7L3.5 4z" fill="#555" /></Svg>
          </button>
          <Tool label="Deselect"><DeselectIcon /></Tool>
          <Tool label="Toggle editing" disabled><PencilIcon /></Tool>
          <Tool label="Save edits" disabled><SaveIcon /></Tool>
          <Tool label="Add feature" disabled><PolygonAddIcon /></Tool>
        </div>
        <main className="flex min-h-0 flex-1 gap-[5px] pt-[2px]">
          <div className="flex w-[312px] shrink-0 flex-col gap-1">
            <DataSources />
            <DataViews />
          </div>
          <div className="flex min-w-0 flex-1 flex-col gap-[5px] pb-px">
            <MapDock name="Map #1"><TrueColourScene /></MapDock>
            <MapDock name="Map #2" linked><BiomassScene /></MapDock>
          </div>
          <ProcessingToolbox />
        </main>
        <footer className="flex h-[18px] items-end justify-end p-0.5">
          <Svg size="size-2" box="0 0 8 8">
            <path d="M6 0h2v2H6zM3 3h2v2H3zM6 3h2v2H6zM0 6h2v2H0zM3 6h2v2H3zM6 6h2v2H6z" fill="#bdbdbd" />
          </Svg>
        </footer>
      </div>
    </div>
  );
}
